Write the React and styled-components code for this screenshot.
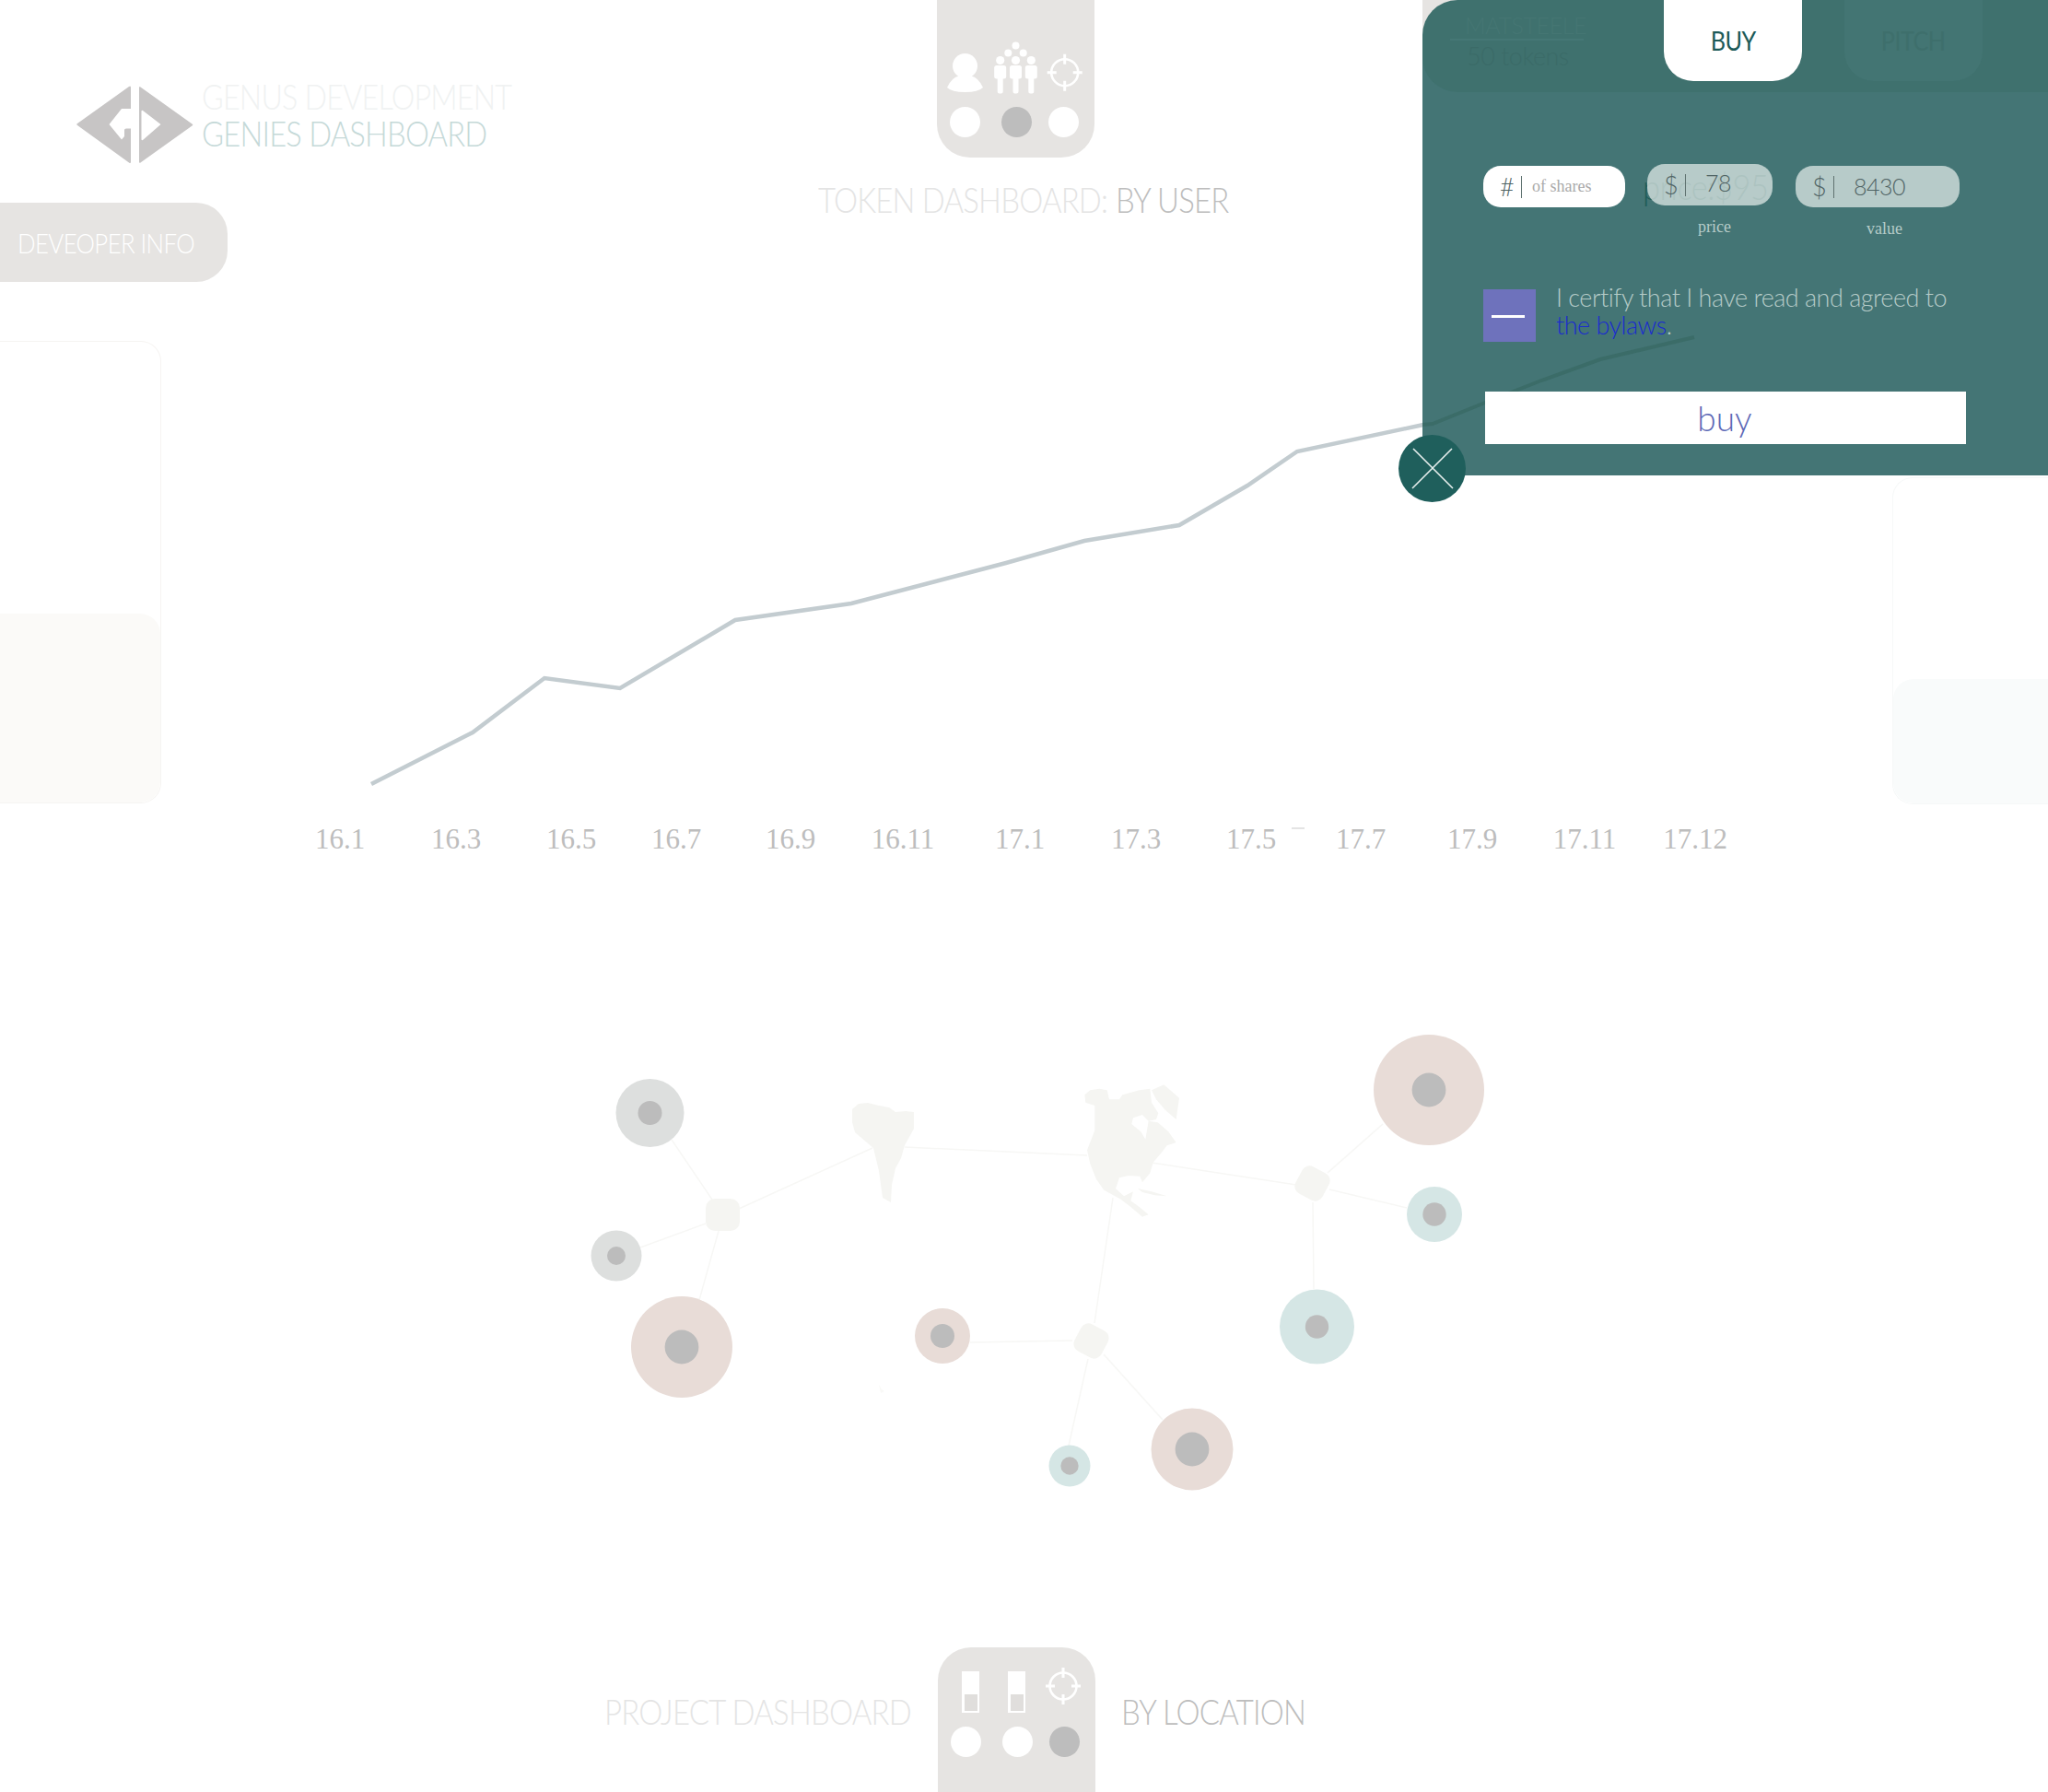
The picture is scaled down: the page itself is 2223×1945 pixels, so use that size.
import React from 'react';
import styled, { createGlobalStyle } from 'styled-components';

const GlobalStyle = createGlobalStyle`
body {
  margin: 0;
  background: #fff;
  font-family: Lato, "Open Sans", sans-serif;
}
`

const Page = styled.div`
position: relative;
width: 2223px;
height: 1945px;
overflow: hidden;
background: #fff;
`

const Header = styled.header`
display: flex;
height: 370px;
`
const BrandCol = styled.div`
width: 888px;
flex-shrink: 0;
`
const Brand = styled.div`
display: flex;
gap: 9px;
padding: 93px 0 0 83px;
height: 220px;
box-sizing: border-box;
`
const BrandText = styled.div`
display: flex;
flex-direction: column;
margin-top: -8px;
`
const BrandLine = styled.div`
font-size: 37px;
font-weight: 300;
line-height: 40px;
letter-spacing: -0.9px;
white-space: nowrap;
transform: scaleX(${p => p.$scale});
transform-origin: left center;
color: ${p => p.$color};
`
const DevInfo = styled.div`
width: 247px;
height: 86px;
box-sizing: border-box;
padding: 0 0 0 19px;
display: flex;
align-items: center;
background: #e6e4e2;
border-radius: 0 34px 34px 0;
`
const DevLabel = styled.span`
color: #fff;
font-size: 29px;
font-weight: 300;
letter-spacing: -0.7px;
white-space: nowrap;
transform: scaleX(0.89);
transform-origin: left center;
`
const CenterCol = styled.div`
display: flex;
flex-direction: column;
width: 450px;
`
const NavTab = styled.div`
width: 171px;
margin-left: ${p => p.$left}px;
height: ${p => p.$height}px;
box-sizing: border-box;
background: #e6e4e2;
border-radius: ${p => p.$flip ? '36px 36px 0 0' : '0 0 36px 36px'};
padding-top: ${p => p.$top}px;
flex-shrink: 0;
`
const NavIcons = styled.svg`
display: block;
width: 171px;
`
const DotRow = styled.div`
display: flex;
padding-left: ${p => p.$left}px;
margin-top: ${p => p.$top}px;
`
const Dot = styled.span`
width: 33px;
height: 33px;
border-radius: 50%;
margin-left: ${p => p.$gap || 0}px;
background: ${p => p.$on ? '#bdbdbd' : '#fff'};
`
const SectionTitle = styled.div`
width: ${p => p.$width}px;
flex-shrink: 0;
font-size: 37px;
font-weight: 300;
line-height: 40px;
letter-spacing: -0.9px;
white-space: nowrap;
transform: scaleX(0.89);
transform-origin: left center;
color: ${p => p.$strong ? '#bdbdbd' : '#e4e4e4'};
`
const TitleRow = styled.div`
display: flex;
gap: 10px;
margin-top: 26px;
`

const ChartRow = styled.section`
display: flex;
height: 560px;
`
const SideCard = styled.div`
flex-shrink: 0;
width: ${p => p.$width}px;
height: ${p => p.$height}px;
margin-top: ${p => p.$top}px;
box-sizing: border-box;
display: flex;
flex-direction: column;
justify-content: flex-end;
overflow: hidden;
border: 1px solid ${p => p.$line};
border-width: ${p => p.$right ? '1px 0 1px 1px' : '1px 1px 1px 0'};
border-radius: ${p => p.$right ? '22px 0 0 22px' : '0 22px 22px 0'};
`
const SideFill = styled.div`
height: ${p => p.$height}px;
background: ${p => p.$color};
border-radius: ${p => p.$right ? '22px 0 0 22px' : '0 22px 22px 0'};
`
const Chart = styled.svg`
display: block;
flex: 1;
height: 560px;
`
const AxisLabel = styled.text`
font-family: "Liberation Serif", serif;
font-size: 31px;
fill: #bdbdbd;
text-anchor: middle;
`

const MapArt = styled.svg`
display: block;
width: 1000px;
height: 560px;
margin: 170px 0 0 620px;
`

const Footer = styled.footer`
display: flex;
align-items: flex-start;
height: 157px;
margin-top: 128px;
padding-left: 656px;
`
const FooterTitle = styled(SectionTitle)`
margin-top: 50px;
margin-left: ${p => p.$left || 0}px;
`

const Panel = styled.aside`
position: absolute;
top: 0;
right: 0;
width: 679px;
height: 516px;
background: linear-gradient(#e6e4e2 0 40px, #447575 40px);
`
const PanelHead = styled.div`
position: relative;
display: flex;
height: 100px;
background: #3f716e;
border-radius: 38px 0 0 38px;
`
const Holder = styled.div`
width: 262px;
box-sizing: border-box;
padding: 13px 0 0 30px;
font-weight: 300;
white-space: nowrap;
`
const HolderName = styled.div`
width: 145px;
height: 31px;
padding-left: 16px;
box-sizing: border-box;
border-bottom: 2px solid #457775;
font-size: 25px;
line-height: 29px;
letter-spacing: -0.4px;
color: #457673;
`
const HolderTokens = styled.div`
font-size: 27px;
line-height: 34px;
letter-spacing: -0.5px;
padding-left: 18px;
color: #3b6b68;
`
const Tab = styled.div`
width: 150px;
height: 88px;
margin-left: ${p => p.$left}px;
display: flex;
align-items: center;
justify-content: center;
border-radius: 0 0 32px 32px;
background: ${p => p.$active ? '#fff' : '#437573'};
color: ${p => p.$active ? '#1d5a58' : '#3e6f6c'};
`
const TabLabel = styled.span`
font-size: 28px;
font-weight: 400;
letter-spacing: -0.6px;
transform: scaleX(0.9);
`
const FieldRow = styled.div`
position: relative;
display: flex;
align-items: flex-start;
margin: 78px 0 0 66px;
`
const GhostPrice = styled.div`
position: absolute;
left: 173px;
top: 3px;
font-size: 37px;
font-weight: 300;
letter-spacing: -0.5px;
line-height: 44px;
white-space: nowrap;
transform: scaleX(0.93);
transform-origin: left center;
color: #1f5c58;
`
const FieldGroup = styled.div`
position: relative;
margin: ${p => p.$top}px 0 0 ${p => p.$left}px;
width: ${p => p.$width}px;
`
const Field = styled.div`
display: flex;
align-items: center;
height: 45px;
box-sizing: border-box;
padding-left: 18px;
border-radius: 19px;
background: ${p => p.$white ? '#fff' : 'rgba(232, 240, 237, 0.7)'};
color: #4f6364;
font-weight: 300;
font-size: 25px;
letter-spacing: -0.5px;
white-space: nowrap;
`
const Prefix = styled.span`
width: 23px;
font-size: 27px;
`
const Sep = styled.span`
width: 1px;
height: 24px;
background: #5f7270;
`
const FieldValue = styled.span`
margin-left: ${p => p.$gap}px;
margin-top: ${p => p.$lift || 0}px;
`
const Hint = styled.span`
margin-left: 11px;
font-family: "Liberation Serif", serif;
font-size: 18px;
letter-spacing: 0;
color: #aaa;
`
const Caption = styled.div`
padding-left: ${p => p.$left}px;
margin-top: ${p => p.$top}px;
font-family: "Liberation Serif", serif;
font-size: 18px;
line-height: 20px;
color: #b5cbc8;
`
const Consent = styled.div`
position: relative;
display: flex;
gap: 22px;
margin: 56px 0 0 66px;
`
const CheckBox = styled.div`
width: 57px;
height: 57px;
flex-shrink: 0;
display: flex;
align-items: center;
justify-content: center;
background: #6e72bc;
`
const CheckDash = styled.span`
width: 36px;
height: 3px;
margin: 1px 3px 0 0;
background: #fff;
`
const ConsentText = styled.div`
margin-top: -6px;
font-size: 27px;
font-weight: 300;
line-height: 30px;
letter-spacing: -0.5px;
white-space: nowrap;
color: #b5cbc8;
`
const LawLink = styled.span`
color: #1a2bd0;
`
const BuyButton = styled.div`
position: relative;
width: 522px;
height: 57px;
margin: 54px 0 0 68px;
display: flex;
align-items: center;
justify-content: center;
padding-right: 2px;
box-sizing: border-box;
background: #fff;
color: #5c68b6;
font-size: 37px;
font-weight: 300;
`
const PanelTrace = styled.svg`
position: absolute;
left: 0;
top: 300px;
`
const CloseButton = styled.div`
position: absolute;
left: 1518px;
top: 472px;
width: 73px;
height: 73px;
border-radius: 50%;
background: #1f5f5c;
`
const CloseIcon = styled.svg`
display: block;
`

const chartPoints = '403,851 513,795 591,736 673,747 798,673 924,655 1092,611 1177,587 1280,570 1354,527 1408,490 1545,461'
const axis = [
  ['16.1', 369], ['16.3', 495], ['16.5', 620], ['16.7', 734], ['16.9', 858], ['16.11', 980], ['17.1', 1107],
  ['17.3', 1233], ['17.5', 1358], ['17.7', 1477], ['17.9', 1598], ['17.11', 1720], ['17.12', 1840],
]

const mapLines = [
  [729, 1237, 773, 1302], [695, 1354, 766, 1328], [780, 1336, 759, 1411], [802, 1312, 947, 1246],
  [982, 1245, 1180, 1254], [1250, 1262, 1407, 1286], [1441, 1273, 1501, 1220], [1443, 1291, 1527, 1311],
  [1425, 1305, 1426, 1399], [1208, 1300, 1188, 1436], [1053, 1457, 1164, 1455], [1181, 1475, 1160, 1569],
  [1198, 1470, 1262, 1541],
]
const mapNodes = [
  [705.5, 1208, 37, 13, '#dddfde'], [669, 1363, 27.5, 10, '#dddfde'], [740, 1462, 55, 18.4, '#e8dcd7'],
  [1023, 1450, 30, 13, '#e8dcd7'], [1161, 1591, 22.5, 9.7, '#d5e6e5'], [1294, 1573, 44.5, 18.4, '#e8dcd7'],
  [1429.5, 1440, 40.5, 12.7, '#d5e6e5'], [1557, 1318, 30, 12.7, '#d5e6e5'], [1551, 1183, 60, 18.4, '#e8dcd7'],
]

const Crosshair = ({ x, y }) => (
  <g stroke="#fff" fill="none">
    <circle cx={x} cy={y} r="14.5" strokeWidth="2.6" />
    <path d={`M${x} ${y - 20}V${y - 9}M${x} ${y + 9}V${y + 20}M${x - 19} ${y}H${x - 9}M${x + 9} ${y}H${x + 19}`} strokeWidth="3" />
  </g>
)

const Figure = ({ x }) => (
  <g fill="#fff">
    <circle cx={x} cy="65.5" r="4.6" />
    <path d={`M${x - 4} 71h8q2.500 0 2.500 2.500v10q0 2-2.500 2h-1v14q0 2-2 2h-2q-2 0-2-2v-14h-1q-2.500 0-2.500-2v-10q0-2.500 2.500-2.500z`} />
  </g>
)

const Logo = () => (
  <svg width="127" height="85" viewBox="83 93 127 85">
    <path fill="#c7c5c5" d="M140 94q2-1.500 2 1v23h-10l-13.500 17 13.500 16.500 3-3.500v-7q0-1.500 2-1.500h5v36q0 2.500-2 1L84 136q-1.500-1 0-2zM152.500 94.500q-1.500-1.500-1.500 1v80q0 2 1.500 1l56-40q1.500-1 0-2zM155 120l19.500 15-19.500 17q-1.500 1-1.500-1v-30q0-2 1.500-1z" fillRule="evenodd" />
  </svg>
)

const App = () => {
  return (
    <Page>
      <GlobalStyle />
      <Header>
        <BrandCol>
          <Brand>
            <Logo />
            <BrandText>
              <BrandLine $color="#f0f2f2" $scale={0.872}>GENUS DEVELOPMENT</BrandLine>
              <BrandLine $color="#c5d9d8" $scale={0.885}>GENIES DASHBOARD</BrandLine>
            </BrandText>
          </Brand>
          <DevInfo><DevLabel>DEVEOPER INFO</DevLabel></DevInfo>
        </BrandCol>
        <CenterCol>
          <NavTab $left={129} $height={171} $top={45}>
            <NavIcons viewBox="1017 45 171 60" height="60">
              <circle cx="1047.500" cy="71.500" r="13.500" fill="#fff" />
              <path fill="#fff" d="M1028 95q5-11 13-12.500 6.500 3 13 0 8 1.500 13 12.500-5 5-19.500 5t-19.500-5z" />
              <circle cx="1102.500" cy="49.500" r="4" fill="#fff" />
              <circle cx="1094.300" cy="57.500" r="4" fill="#fff" />
              <circle cx="1110.700" cy="57.500" r="4" fill="#fff" />
              <Figure x={1085.7} />
              <Figure x={1102.5} />
              <Figure x={1119.3} />
              <Crosshair x={1155.7} y={78.7} />
            </NavIcons>
            <DotRow $left={14} $top={11}>
              <Dot />
              <Dot $on $gap={23} />
              <Dot $gap={18} />
            </DotRow>
          </NavTab>
          <TitleRow>
            <SectionTitle $width={313}>TOKEN DASHBOARD:</SectionTitle>
            <SectionTitle $strong $width={125}>BY USER</SectionTitle>
          </TitleRow>
        </CenterCol>
      </Header>

      <ChartRow>
        <SideCard $width={175} $height={502} $top={0} $line="#f6f4f2">
          <SideFill $height={205} $color="#fbfaf8" />
        </SideCard>
        <Chart viewBox="175 370 1879 560">
          <polyline points={chartPoints} fill="none" stroke="#c3ccd0" strokeWidth="4.5" />
          {axis.map(([label, x]) => <AxisLabel key={label} x={x} y="921">{label}</AxisLabel>)}
          <rect x="1402" y="898" width="14" height="2" fill="#e4e4e4" />
        </Chart>
        <SideCard $right $width={169} $height={355} $top={148} $line="#f6f8f8">
          <SideFill $right $height={135} $color="#f9fbfb" />
        </SideCard>
      </ChartRow>

      <MapArt viewBox="620 1100 1000 560">
        <g stroke="#f7f7f5" strokeWidth="1.500">
          {mapLines.map(([x1, y1, x2, y2]) => <line key={`${x1}-${y1}`} x1={x1} y1={y1} x2={x2} y2={y2} />)}
        </g>
        <g fill="#f5f5f2">
          <path d="M925 1204L932 1198L942 1197L954 1200L965 1202L972 1207L983 1206L992 1207L992 1225L982 1243L978 1257L972 1268L968 1286L967 1305L958 1300L954 1271L948 1246L928 1229L925 1218z" />
          <g transform="translate(1140 1150) scale(.3333)">
            <path d="M112 115L130 100L160 95L185 100L192 130L225 130L235 115L290 100L325 95L330 140L352 175L345 195L320 200L300 180L270 190L265 210L295 235L310 260L320 200L350 205L385 235L410 270L380 280L365 300L335 335L325 370L300 400L292 380L255 378L225 385L213 420L240 445L270 430L262 460L290 480L320 505L300 512L262 480L230 455L175 425L150 390L130 340L120 295L145 230L145 150L115 140z" />
            <path d="M330 100L370 82L420 125L410 195L375 165L345 130z" />
            <path d="M285 420L330 430L380 445L340 442L300 432z" />
          </g>
          <rect x="766" y="1301" width="37" height="35" rx="10" />
          <rect x="1168" y="1439" width="33" height="33" rx="9" transform="rotate(28 1184.500 1455.500)" />
          <rect x="1408" y="1268" width="33" height="33" rx="9" transform="rotate(28 1424.500 1284.500)" />
        </g>
        <path d="M954 1503l3 5 3 2-4 2z" fill="#f9f9f7" />
        {mapNodes.map(([x, y, outer, inner, color]) => (
          <g key={`${x}-${y}`}>
            <circle cx={x} cy={y} r={outer} fill={color} />
            <circle cx={x} cy={y} r={inner} fill="#bcbcbc" />
          </g>
        ))}
      </MapArt>

      <Footer>
        <FooterTitle $width={362}>PROJECT DASHBOARD</FooterTitle>
        <NavTab $flip $left={0} $height={157} $top={22}>
          <NavIcons viewBox="1018 1810 171 60" height="60">
            <rect x="1044" y="1814" width="19" height="45" fill="#fff" />
            <rect x="1047" y="1839" width="14" height="18" fill="#e0dedc" />
            <rect x="1094" y="1814" width="19" height="45" fill="#fff" />
            <rect x="1097" y="1839" width="14" height="18" fill="#e0dedc" />
            <Crosshair x={1154} y={1830} />
          </NavIcons>
          <DotRow $left={14} $top={4}>
            <Dot />
            <Dot $gap={23} />
            <Dot $on $gap={18} />
          </DotRow>
        </NavTab>
        <FooterTitle $strong $width={230} $left={28}>BY LOCATION</FooterTitle>
      </Footer>

      <Panel>
        <PanelTrace width="679" height="216" viewBox="1544 300 679 216">
          <polyline points="1544,461 1555,460 1612,437 1673,413 1737,390 1839,366" fill="none" stroke="#3b6c68" strokeWidth="4" />
        </PanelTrace>
        <PanelHead>
          <Holder>
            <HolderName>MATSTEELE</HolderName>
            <HolderTokens>50 tokens</HolderTokens>
          </Holder>
          <Tab $left={0} $active><TabLabel>BUY</TabLabel></Tab>
          <Tab $left={46}><TabLabel>PITCH</TabLabel></Tab>
        </PanelHead>
        <FieldRow>
          <GhostPrice>price:$95</GhostPrice>
          <FieldGroup $left={0} $top={2} $width={154}>
            <Field $white>
              <Prefix>#</Prefix>
              <Sep />
              <Hint>of shares</Hint>
            </Field>
          </FieldGroup>
          <FieldGroup $left={24} $top={0} $width={136}>
            <Field>
              <Prefix>$</Prefix>
              <Sep />
              <FieldValue $gap={21} $lift={-6}>78</FieldValue>
            </Field>
            <Caption $left={55} $top={13}>price</Caption>
          </FieldGroup>
          <FieldGroup $left={25} $top={2} $width={178}>
            <Field>
              <Prefix>$</Prefix>
              <Sep />
              <FieldValue $gap={21} $lift={-2}>8430</FieldValue>
            </Field>
            <Caption $left={77} $top={13}>value</Caption>
          </FieldGroup>
        </FieldRow>
        <Consent>
          <CheckBox><CheckDash /></CheckBox>
          <ConsentText>
            I certify that I have read and agreed to<br />
            <LawLink>the bylaws</LawLink>.
          </ConsentText>
        </Consent>
        <BuyButton>buy</BuyButton>
      </Panel>
      <CloseButton>
        <CloseIcon width="73" height="73" viewBox="0 0 73 73">
          <path d="M16 15L59 58M58 15L15 58" stroke="#e8f0ef" strokeWidth="1.500" />
        </CloseIcon>
      </CloseButton>
    </Page>
  )
}

export default App;
